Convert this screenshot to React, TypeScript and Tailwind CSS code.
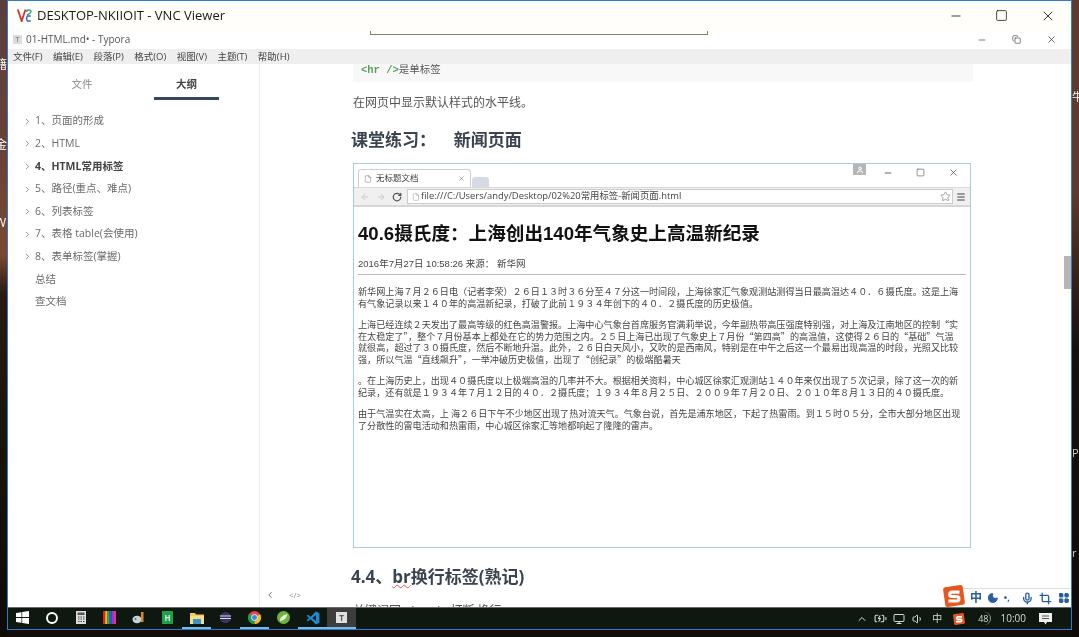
import { BatteryCharging, ChevronLeft, ChevronRight, ChevronUp, Crop, File, Menu, Mic, Minus, Moon, Monitor, Square, Star, Volume1, X, ArrowLeft, ArrowRight, RotateCw, Copy, LayoutGrid, User } from 'lucide-react';

const outline = [
  { text: '1、页面的形成', arrow: true },
  { text: '2、HTML', arrow: true },
  { text: '4、HTML常用标签', arrow: true, bold: true },
  { text: '5、路径(重点、难点)', arrow: true },
  { text: '6、列表标签', arrow: true },
  { text: '7、表格 table(会使用)', arrow: true },
  { text: '8、表单标签(掌握)', arrow: true },
  { text: '总结' },
  { text: '查文档' },
];

const menus = ['文件(F)', '编辑(E)', '段落(P)', '格式(O)', '视图(V)', '主题(T)', '帮助(H)'];

const news = [
  [
    '新华网上海７月２６日电（记者李荣）２６日１３时３６分至４７分这一时间段，上海徐家汇气象观测站测得当日最高温达４０．６摄氏度。这是上海',
    '有气象记录以来１４０年的高温新纪录，打破了此前１９３４年创下的４０．２摄氏度的历史极值。',
  ],
  [
    '上海已经连续２天发出了最高等级的红色高温警报。上海中心气象台首席服务官满莉举说，今年副热带高压强度特别强，对上海及江南地区的控制“实',
    '在太稳定了”，整个７月份基本上都处在它的势力范围之内。２５日上海已出现了气象史上７月份“第四高”的高温值，这使得２６日的“基础”气温',
    '就很高，超过了３０摄氏度，然后不断地升温。此外，２６日白天风小，又吹的是西南风，特别是在中午之后这一个最易出现高温的时段，光照又比较',
    '强，所以气温“直线飙升”，一举冲破历史极值，出现了“创纪录”的极端酷暑天',
  ],
  [
    '。在上海历史上，出现４０摄氏度以上极端高温的几率并不大。根据相关资料，中心城区徐家汇观测站１４０年来仅出现了５次记录，除了这一次的新',
    '纪录，还有就是１９３４年７月１２日的４０．２摄氏度；１９３４年８月２５日、２００９年７月２０日、２０１０年８月１３日的４０摄氏度。',
  ],
  [
    '由于气温实在太高，上 海２６日下午不少地区出现了热对流天气。气象台说，首先是浦东地区，下起了热雷雨。到１５时０５分，全市大部分地区出现',
    '了分散性的雷电活动和热雷雨，中心城区徐家汇等地都响起了隆隆的雷声。',
  ],
];

function TaskIcon({ active, current, children }: { active?: boolean; current?: boolean; children: React.ReactNode }) {
  return (
    <div className={`w-[29px] h-full flex items-center justify-center border-b-2 ${active ? 'border-[#76b9ed]' : 'border-transparent'} ${current ? 'bg-[#3d3d3d]' : ''}`}>
      {children}
    </div>
  );
}

function SogouS({ size }: { size: number }) {
  return (
    <svg width={size} height={size} viewBox="0 0 20 20">
      <rect x="1" y="1" width="18" height="18" rx="2" fill="#e8561f" transform="rotate(-8 10 10)" />
      <path d="M15 6.5H8a2 2 0 0 0 0 4h4.500a2 2 0 0 1 0 4H5" fill="none" stroke="#fff" strokeWidth="2.800" />
    </svg>
  );
}

export default function App() {
  return (
    <div className="w-[1079px] h-[637px] overflow-hidden flex font-['Open_Sans','Noto_Sans_CJK_SC',sans-serif] bg-[#120c0a] blur-[0.3px]">
      {/* desktop left edge */}
      <div className="w-[7px] h-full overflow-hidden bg-[linear-gradient(180deg,#5a3e3c_0%,#6b4234_25%,#7a4a30_40%,#2a1a10_46%,#1d1608_65%,#0d0a08_100%)] text-white text-[12px] leading-none">
        <div className="h-[59px]" />
        <div className="h-[80px] -ml-[5px] whitespace-nowrap">籍</div>
        <div className="h-[78px] -ml-[5px] whitespace-nowrap">金</div>
        <div className="-ml-[5px] whitespace-nowrap">Wi</div>
      </div>

      <div className="w-[1065px] h-[630px] border border-[#2d7cc4] bg-white flex flex-col relative">
        {/* VNC title bar */}
        <div className="h-[29px] flex items-center bg-[#fffefb] shrink-0">
          <svg className="ml-[9px] mr-[5px]" width="15" height="13" viewBox="0 0 15 13" fill="none">
            <path d="M0.800 0.500 4.700 12 8.500 0.500" stroke="#d9322c" strokeWidth="1.800" />
            <path d="M9.500 3C9.500 0.300 14 0.300 14 2.800 14 4.500 11 5 9.800 6.200" stroke="#2f9c8f" strokeWidth="1.400" />
            <path d="M13.800 7H10.500C9.300 8 9.300 11 10.500 12H13.800" stroke="#2a6fc0" strokeWidth="1.500" />
          </svg>
          <span className="text-[13px] text-[#1a1a1a]">DESKTOP-NKIIOIT - VNC Viewer</span>
          <div className="ml-auto flex items-center gap-[32px] mr-[15px] text-[#111]">
            <Minus size={14} strokeWidth={1.400} />
            <Square size={13} strokeWidth={1.400} />
            <X size={16} strokeWidth={1.300} />
          </div>
        </div>

        {/* Typora title bar */}
        <div className="h-[19px] flex items-center shrink-0 relative">
          <div className="ml-[5px] w-[9px] h-[9px] bg-[#dcdcdc] text-[7px] leading-[9px] text-center text-[#666]">T</div>
          <span className="ml-[4px] text-[10px] text-[#555]">01-HTML.md• - Typora</span>
          {/* 滚上去的代码块边框 */}
          <div className="absolute left-[362px] top-[1px] w-[338px] h-[4px] border-b border-x border-[#85835c]" />
          <div className="ml-auto flex items-center gap-[25px] mr-[14px] text-[#333]">
            <Minus size={10} strokeWidth={1.600} />
            <Copy size={9} strokeWidth={1.600} />
            <X size={11} strokeWidth={1.600} />
          </div>
        </div>

        {/* menu bar */}
        <div className="h-[15px] bg-[#efefef] flex items-center shrink-0 pl-[5px] gap-[10.500px] text-[9.500px] leading-[17px] text-[#444]">
          {menus.map((m) => (
            <span key={m}>{m}</span>
          ))}
        </div>

        <div className="flex-1 flex min-h-0">
          {/* sidebar */}
          <aside className="w-[252px] shrink-0 border-r border-[#eeeeee] flex flex-col relative">
            <div className="flex h-[36px] text-[10.500px]">
              <div className="w-[146px] pl-[2px] pt-[15px] leading-none text-center text-[#8a8a8a]">文件</div>
              <div className="w-[65px] pt-[15px] leading-none text-center font-bold text-[#444] border-b-[3px] border-[#34495e]">大纲</div>
            </div>
            <ul className="mt-[10px] text-[10.500px] text-[#6a6a6a]">
              {outline.map((item) => (
                <li key={item.text} className="h-[22.600px] flex items-center pl-[15px]">
                  <span className="w-[12px] shrink-0">
                    {item.arrow && <ChevronRight size={9} strokeWidth={2.200} className="text-[#777]" />}
                  </span>
                  <span className={item.bold ? 'font-bold text-[#444]' : ''}>{item.text}</span>
                </li>
              ))}
            </ul>
            <div className="absolute left-full bottom-[7px] pl-[6px] flex items-center gap-[14px] text-[#888]">
              <ChevronLeft size={10} strokeWidth={2} className="text-[#555]" />
              <span className="text-[8px] leading-none">&lt;/&gt;</span>
            </div>
          </aside>

          {/* editor */}
          <main className="flex-1 min-w-0 overflow-hidden pl-[93px] text-[#4a4f57]">
            <div className="w-[620px] h-[18px] bg-[#f8f8f8] pl-[8px] text-[10.500px] leading-[10px]">
              <span className="font-['Liberation_Mono',monospace] font-bold text-[#5a9f5a]">&lt;hr /&gt;</span>
              <span className="text-[#555]">是单标签</span>
            </div>
            <p className="mt-[12px] text-[12px] leading-[18px] text-[#555]">在网页中显示默认样式的水平线。</p>
            <h3 className="mt-[17px] -ml-[2px] text-[17px] leading-[22px] font-bold text-[#3a4450] whitespace-pre">课堂练习：    新闻页面</h3>

            {/* 截图 */}
            <div className="mt-[12px] w-[618px] h-[385px] border border-[#a8cdd4] bg-white flex flex-col">
              <div className="h-[24px] flex items-end bg-white relative shrink-0 border-b border-[#d8d8d8]">
                <div className="ml-[4px] w-[113px] h-[18px] border border-b-0 border-[#cfcfcf] rounded-t-[3px] flex items-center pl-[5px] text-[8.500px] text-[#444]">
                  <File size={8} strokeWidth={1.500} className="text-[#777] mr-[4px]" />
                  无标题文档
                  <X size={7} className="ml-auto mr-[5px] text-[#666]" />
                </div>
                <div className="ml-[1px] w-[17px] h-[10px] bg-[#d5dbe4] rounded-t-[3px]" />
                <div className="absolute right-[104px] top-0 w-[13px] h-[11px] bg-[#b5b5b5] flex items-center justify-center">
                  <User size={8} strokeWidth={3} className="text-white" />
                </div>
                <div className="absolute right-[11px] top-[3px] flex items-center gap-[23px] text-[#444]">
                  <Minus size={10} strokeWidth={2} />
                  <Square size={9} strokeWidth={1.500} />
                  <X size={11} strokeWidth={1.500} />
                </div>
              </div>
              <div className="h-[19px] bg-[#f0f0f0] border-b-2 border-[#d6d6d6] flex items-center pl-[6px] pr-[4px] shrink-0">
                <ArrowLeft size={10} className="text-[#c5c5c5] mr-[6px]" />
                <ArrowRight size={10} className="text-[#c5c5c5] mr-[6px]" />
                <RotateCw size={10} strokeWidth={3} className="text-[#555] mr-[5px]" />
                <div className="flex-1 h-[15px] bg-white border border-[#cccccc] flex items-center pl-[4px] text-[9.400px] text-[#444]">
                  <File size={8} className="text-[#aaa] mr-[1px]" />
                  file:///C:/Users/andy/Desktop/02%20常用标签-新闻页面.html
                  <Star size={11} className="ml-auto mr-[1px] text-[#999]" />
                </div>
                <Menu size={10} strokeWidth={2.500} className="ml-[3px] text-[#444]" />
              </div>
              <div lang="zh-CN" className="flex-1 px-[4px] pt-[13px] font-['Liberation_Sans','Noto_Sans_CJK_SC',sans-serif]">
                <h1 className="text-[18.600px] leading-[24px] font-bold text-[#111] whitespace-nowrap">
                  40.6摄氏度<span className="font-['Noto_Sans_CJK_TC',sans-serif]">：</span>上海创出140年气象史上高温新纪录
                </h1>
                <div className="mt-[11px] pb-[3px] text-[9.500px] leading-[14px] text-[#444] border-b border-[#bbbbbb]">2016年7月27日 10:58:26 来源： 新华网</div>
                <div className="mt-[11px] font-['Noto_Sans_CJK_SC',sans-serif] text-[9.100px] leading-[11.800px] text-[#444] whitespace-nowrap flex flex-col gap-[9.200px]">
                  {news.map((para, i) => (
                    <p key={i}>
                      {para.map((line) => (
                        <span key={line} className="block">{line}</span>
                      ))}
                    </p>
                  ))}
                </div>
              </div>
            </div>

            <h3 className="mt-[18px] -ml-[2px] text-[17px] leading-[22px] font-bold text-[#3a4450]">
              4.4、<span className="underline decoration-wavy decoration-[#e05555] decoration-1">br</span>换行标签(熟记)
            </h3>
            <p className="mt-[14px] text-[12px] leading-[18px] text-[#555]">关键词回 <span className="font-['Liberation_Mono',monospace]">&lt;br /&gt;</span> 打断 换行</p>
          </main>
        </div>

        {/* 滚动条 */}
        <div className="absolute right-0 top-[255px] w-[7px] h-[33px] bg-[#b5b5b5]" />

        {/* 输入法工具条 */}
        <div className="absolute right-[1px] bottom-[22px] w-[126px] h-[19px] bg-white/90 border-t border-[#dddddd] flex items-center gap-[5px] text-[#2a5d9f]">
          <span className="-mt-[4px] -ml-[1px]"><SogouS size={22} /></span>
          <span className="text-[12px] font-bold">中</span>
          <Moon size={12} fill="currentColor" />
          <span className="text-[9px] font-bold w-[9px]">•,</span>
          <Mic size={13} strokeWidth={2.500} className="ml-[3px]" />
          <Crop size={13} strokeWidth={2.500} className="ml-[1px]" />
          <LayoutGrid size={12} fill="currentColor" className="ml-[1px]" />
        </div>

        {/* taskbar */}
        <div className="h-[22px] shrink-0 bg-[#0e1811] flex items-stretch border-t border-[#6a6a6a] text-[#d8d8d8] pr-[4px] z-10">
          <TaskIcon>
            <svg width="13" height="13" viewBox="0 0 13 13" fill="#fff"><path d="M0 2l5.500-.8V6H0zM6.200 1.100 13 0v6H6.200zM0 7h5.500v4.800L0 11zM6.200 7H13v6l-6.800-1z" /></svg>
          </TaskIcon>
          <TaskIcon>
            <div className="w-[12px] h-[12px] rounded-full border-2 border-white" />
          </TaskIcon>
          <TaskIcon>
            <svg width="10" height="13" viewBox="0 0 10 13"><rect width="10" height="13" fill="#ddd" /><rect x="1.500" y="1.500" width="7" height="2.500" fill="#555" /><path d="M2 6h1.500M4.500 6H6M7 6h1.500M2 8h1.500M4.500 8H6M7 8h1.500M2 10.500h1.500M4.500 10.500H6M7 10.500h1.500" stroke="#444" /></svg>
          </TaskIcon>
          <TaskIcon>
            <svg width="13" height="13" viewBox="0 0 13 13"><rect width="2.200" height="13" fill="#e02020" /><rect x="2.200" width="2.200" height="13" fill="#f0c020" /><rect x="4.400" width="2.200" height="13" fill="#30b040" /><rect x="6.600" width="2.200" height="13" fill="#2060e0" /><rect x="8.800" width="2.200" height="13" fill="#a030d0" /><rect x="11" width="2" height="13" fill="#e03090" /></svg>
          </TaskIcon>
          <TaskIcon>
            <svg width="13" height="12" viewBox="0 0 13 12"><ellipse cx="5" cy="7.500" rx="4.500" ry="3.800" fill="#c6d3dc" /><circle cx="3.500" cy="7" r="1" fill="#3a8a50" /><rect x="9" y="0" width="2.500" height="10" fill="#d88a30" /></svg>
          </TaskIcon>
          <TaskIcon>
            <div className="w-[11px] h-[13px] bg-[#1e9f4a] text-[#cfeedb] text-[8px] font-bold leading-[13px] text-center">H</div>
          </TaskIcon>
          <TaskIcon active>
            <svg width="14" height="12" viewBox="0 0 14 12"><path d="M0 1h5l1 1.500h8V12H0z" fill="#f0c860" /><rect y="4" width="14" height="8" fill="#f6dc8c" /><rect x="3" y="7" width="8" height="5" fill="#3b93c4" /></svg>
          </TaskIcon>
          <TaskIcon>
            <svg width="11" height="11" viewBox="0 0 11 11"><circle cx="5.500" cy="5.500" r="5.500" fill="#3a3560" /><rect y="3.500" width="11" height="1" fill="#d8d8e8" /><rect y="6" width="11" height="1" fill="#d8d8e8" /></svg>
          </TaskIcon>
          <TaskIcon active>
            <svg width="13" height="13" viewBox="0 0 24 24"><circle cx="12" cy="12" r="12" fill="#dd4b3e" /><path d="M12 12 22.400 6A12 12 0 0 1 12 24z" fill="#f4c20d" /><path d="M12 12 12 24A12 12 0 0 1 1.600 6z" fill="#1a9e52" /><circle cx="12" cy="12" r="5.500" fill="#4285f4" stroke="#fff" strokeWidth="1.500" /></svg>
          </TaskIcon>
          <TaskIcon>
            <svg width="13" height="13" viewBox="0 0 13 13"><circle cx="6.500" cy="6.500" r="6.500" fill="#6db33f" /><path d="M3 10c0-4 3-6 7.500-7-1 4-3 6.500-7.500 7z" fill="#e6f2d8" /></svg>
          </TaskIcon>
          <TaskIcon active>
            <svg width="14" height="14" viewBox="0 0 24 24"><path d="M17 1 8 10 3.500 6.500 1 8l4.500 4L1 16l2.500 1.500L8 14l9 9 6-3V4zm0 6v10l-6-5z" fill="#1f8ad2" /></svg>
          </TaskIcon>
          <TaskIcon active current>
            <div className="w-[11px] h-[11px] bg-[#e0e0e0] text-[#555] text-[8px] leading-[11px] text-center font-bold">T</div>
          </TaskIcon>

          <div className="ml-auto flex items-center text-[10px]">
            <ChevronUp size={12} className="mr-[6px]" />
            <BatteryCharging size={13} className="mr-[6px]" />
            <Monitor size={12} className="mr-[7px]" />
            <Volume1 size={12} className="mr-[8px]" />
            <span className="text-[10px] mr-[11px]">中</span>
            <SogouS size={12} />
            <span className="ml-[13px] pr-[1px] text-[9px] border-r border-[#999] rounded-full">48</span>
            <span className="ml-[10px]">10:00</span>
            <svg className="ml-[13px] mr-[15px]" width="13" height="12" viewBox="0 0 13 12"><path d="M0 0h13v9H8l-1.500 2.500L5 9H0z" fill="#eee" /><path d="M3 3h7M3 5.500h7" stroke="#555" /></svg>
          </div>
        </div>
      </div>

      {/* desktop right edge */}
      <div className="w-[7px] h-full overflow-hidden bg-[linear-gradient(180deg,#5c3a2e_0%,#5e3a2c_30%,#3a241a_42%,#17100b_55%,#100a08_100%)] text-white text-[11px] leading-none">
        <div className="h-[91px]" />
        <div className="h-[356px]">牛</div>
        <div className="h-[100px] text-[#ccc]">P</div>
        <div className="text-[#ccc]">r</div>
      </div>
    </div>
  );
}
